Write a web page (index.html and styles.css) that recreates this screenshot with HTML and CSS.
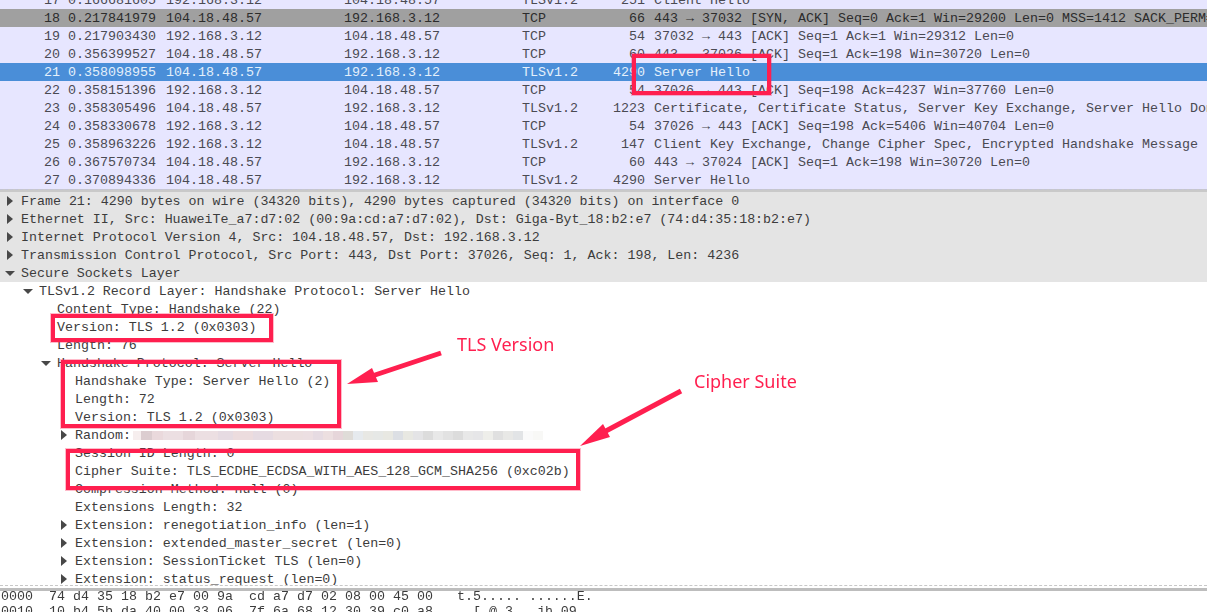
FILE: index.html
```html
<!DOCTYPE html>
<html lang="en">
<head>
<meta charset="utf-8">
<title>Wireshark capture</title>
<link rel="stylesheet" href="styles.css">
</head>
<body>
<div class="app">
  <section class="packets">
    <div class="pkt"><span class="no">17</span><span class="time">0.166681605</span><span class="addr">192.168.3.12</span><span class="addr">104.18.48.57</span><span class="proto">TLSv1.2</span><span class="len">251</span><span class="info">Client Hello</span></div>
    <div class="pkt dark"><span class="no">18</span><span class="time">0.217841979</span><span class="addr">104.18.48.57</span><span class="addr">192.168.3.12</span><span class="proto">TCP</span><span class="len">66</span><span class="info">443 → 37032 [SYN, ACK] Seq=0 Ack=1 Win=29200 Len=0 MSS=1412 SACK_PERM=1</span></div>
    <div class="pkt"><span class="no">19</span><span class="time">0.217903430</span><span class="addr">192.168.3.12</span><span class="addr">104.18.48.57</span><span class="proto">TCP</span><span class="len">54</span><span class="info">37032 → 443 [ACK] Seq=1 Ack=1 Win=29312 Len=0</span></div>
    <div class="pkt"><span class="no">20</span><span class="time">0.356399527</span><span class="addr">104.18.48.57</span><span class="addr">192.168.3.12</span><span class="proto">TCP</span><span class="len">60</span><span class="info">443 → 37026 [ACK] Seq=1 Ack=198 Win=30720 Len=0</span></div>
    <div class="pkt sel"><span class="no">21</span><span class="time">0.358098955</span><span class="addr">104.18.48.57</span><span class="addr">192.168.3.12</span><span class="proto">TLSv1.2</span><span class="len">4290</span><span class="info">Server Hello</span></div>
    <div class="pkt"><span class="no">22</span><span class="time">0.358151396</span><span class="addr">192.168.3.12</span><span class="addr">104.18.48.57</span><span class="proto">TCP</span><span class="len">54</span><span class="info">37026 → 443 [ACK] Seq=198 Ack=4237 Win=37760 Len=0</span></div>
    <div class="pkt"><span class="no">23</span><span class="time">0.358305496</span><span class="addr">104.18.48.57</span><span class="addr">192.168.3.12</span><span class="proto">TLSv1.2</span><span class="len">1223</span><span class="info">Certificate, Certificate Status, Server Key Exchange, Server Hello Done</span></div>
    <div class="pkt"><span class="no">24</span><span class="time">0.358330678</span><span class="addr">192.168.3.12</span><span class="addr">104.18.48.57</span><span class="proto">TCP</span><span class="len">54</span><span class="info">37026 → 443 [ACK] Seq=198 Ack=5406 Win=40704 Len=0</span></div>
    <div class="pkt"><span class="no">25</span><span class="time">0.358963226</span><span class="addr">192.168.3.12</span><span class="addr">104.18.48.57</span><span class="proto">TLSv1.2</span><span class="len">147</span><span class="info">Client Key Exchange, Change Cipher Spec, Encrypted Handshake Message</span></div>
    <div class="pkt"><span class="no">26</span><span class="time">0.367570734</span><span class="addr">104.18.48.57</span><span class="addr">192.168.3.12</span><span class="proto">TCP</span><span class="len">60</span><span class="info">443 → 37024 [ACK] Seq=1 Ack=198 Win=30720 Len=0</span></div>
    <div class="pkt"><span class="no">27</span><span class="time">0.370894336</span><span class="addr">104.18.48.57</span><span class="addr">192.168.3.12</span><span class="proto">TLSv1.2</span><span class="len">4290</span><span class="info">Server Hello</span></div>
  </section>
  <div class="splitter"></div>
  <section class="details">
    <div class="node top l0"><i class="tw closed"></i>Frame 21: 4290 bytes on wire (34320 bits), 4290 bytes captured (34320 bits) on interface 0</div>
    <div class="node top l0"><i class="tw closed"></i>Ethernet II, Src: HuaweiTe_a7:d7:02 (00:9a:cd:a7:d7:02), Dst: Giga-Byt_18:b2:e7 (74:d4:35:18:b2:e7)</div>
    <div class="node top l0"><i class="tw closed"></i>Internet Protocol Version 4, Src: 104.18.48.57, Dst: 192.168.3.12</div>
    <div class="node top l0"><i class="tw closed"></i>Transmission Control Protocol, Src Port: 443, Dst Port: 37026, Seq: 1, Ack: 198, Len: 4236</div>
    <div class="node top l0"><i class="tw open"></i>Secure Sockets Layer</div>
    <div class="node l1"><i class="tw open"></i>TLSv1.2 Record Layer: Handshake Protocol: Server Hello</div>
    <div class="node l2"><i class="tw"></i>Content Type: Handshake (22)</div>
    <div class="node l2"><i class="tw"></i>Version: TLS 1.2 (0x0303)</div>
    <div class="node l2"><i class="tw"></i>Length: 76</div>
    <div class="node l2"><i class="tw open"></i>Handshake Protocol: Server Hello</div>
    <div class="node l3"><i class="tw"></i>Handshake Type: Server Hello (2)</div>
    <div class="node l3"><i class="tw"></i>Length: 72</div>
    <div class="node l3"><i class="tw"></i>Version: TLS 1.2 (0x0303)</div>
    <div class="node l3"><i class="tw closed"></i>Random:<span class="blur"></span></div>
    <div class="node l3"><i class="tw"></i>Session ID Length: 0</div>
    <div class="node l3"><i class="tw"></i>Cipher Suite: TLS_ECDHE_ECDSA_WITH_AES_128_GCM_SHA256 (0xc02b)</div>
    <div class="node l3"><i class="tw"></i>Compression Method: null (0)</div>
    <div class="node l3"><i class="tw"></i>Extensions Length: 32</div>
    <div class="node l3"><i class="tw closed"></i>Extension: renegotiation_info (len=1)</div>
    <div class="node l3"><i class="tw closed"></i>Extension: extended_master_secret (len=0)</div>
    <div class="node l3"><i class="tw closed"></i>Extension: SessionTicket TLS (len=0)</div>
    <div class="node l3"><i class="tw closed"></i>Extension: status_request (len=0)</div>
  </section>
  <div class="splitter low"></div>
  <section class="hex">
    <div class="hexrow">0000  74 d4 35 18 b2 e7 00 9a  cd a7 d7 02 08 00 45 00   t.5..... ......E.</div>
    <div class="hexrow">0010  10 b4 5b da 40 00 33 06  7f 6a 68 12 30 39 c0 a8   ..[.@.3. .jh.09..</div>
  </section>
</div>

<div class="mark m1"></div>
<div class="mark m2"></div>
<div class="mark m3"></div>
<div class="mark m4"></div>
<svg class="arrows" width="1207" height="612" viewBox="0 0 1207 612" aria-hidden="true">
  <path d="M441 353 L372 376" />
  <polygon points="347,384 372,368 378,382" />
  <path d="M681 391 L604 432" />
  <polygon points="580,446 603,424 610,437" />
</svg>
<div class="note n1">TLS Version</div>
<div class="note n2">Cipher Suite</div>
</body>
</html>
```
FILE: styles.css
```css
* { box-sizing: border-box; }
html, body { margin: 0; padding: 0; }
body {
  width: 1207px;
  height: 612px;
  overflow: hidden;
  background: #fff;
  position: relative;
  font: 13.33px/18px "Liberation Mono", monospace;
  color: #3a3a3a;
}
.app { display: flex; flex-direction: column; height: 612px; overflow: hidden; filter: blur(0.35px); }

.packets { height: 189px; overflow: hidden; background: #e7e6ff; flex: none; }
.pkt {
  display: grid;
  grid-template-columns: 60px 106px 178px 178px 78px 45px 1fr;
  height: 18px;
  line-height: 20px;
  background: #e7e6ff;
  white-space: pre;
  color: #4a4a52;
  overflow: hidden;
}
.pkt:first-child { margin-top: -9px; }
.pkt.dark { background: #a0a0a0; color: #2c2c2c; }
.pkt.sel { background: #4a8ed8; color: #e4f0fb; }
.no { text-align: right; }
.time { padding-left: 8px; }
.len { text-align: right; }
.info { padding-left: 9px; overflow: hidden; }

.splitter {
  height: 3px;
  flex: none;
  background: #c9c9c9;
  border-top: 1px dashed #c4c4d4;
}
.splitter.low {
  height: 6px;
  background: #fff;
  border-top: 1px dashed #c8c8c8;
  border-bottom: 3px solid #bdbdbd;
}

.details { height: 393px; overflow: hidden; flex: none; background: #fff; font-size: 13.3px; }
.node { display: flex; align-items: flex-start; height: 18px; line-height: 20px; white-space: pre; color: #3c3c3c; }
.node.top { background: #e4e4e4; }
.l0 { padding-left: 3px; }
.l1 { padding-left: 21px; }
.l2 { padding-left: 39px; }
.l3 { padding-left: 57px; }
.tw { width: 18px; height: 18px; flex: none; position: relative; }
.tw.closed::before {
  content: "";
  position: absolute;
  left: 4px; top: 4px;
  border-left: 6px solid #484848;
  border-top: 5px solid transparent;
  border-bottom: 5px solid transparent;
}
.tw.open::before {
  content: "";
  position: absolute;
  left: 2px; top: 7px;
  border-top: 5px solid #484848;
  border-left: 5px solid transparent;
  border-right: 5px solid transparent;
}
.blur {
  width: 410px;
  height: 9px;
  margin: 5px 0 0 2px;
  background: linear-gradient(90deg,
    #f6eeee 0 8px, #dccdd0 8px 19px, #ead9dc 19px 30px, #ecdfe2 30px 50px,
    #e6d6da 50px 62px, #ecdfe2 62px 85px, #e6dbe2 85px 100px, #ecdcde 100px 120px,
    #e6dbe2 120px 140px, #ecdfe0 140px 170px,
    #ecdfe2 170px 180px, #e6dbe2 180px 190px, #ecdfe0 190px 200px, #e6d6da 200px 210px,
    #dfdcd8 210px 220px, #e6eaee 220px 230px, #e8e8e4 230px 240px, #e6e8e6 240px 250px,
    #e8e8e2 250px 260px, #dcdfe4 260px 270px, #e8e8e2 270px 280px, #e4e4e6 280px 290px,
    #dcdcdc 290px 300px, #e8e8e8 300px 310px, #e2e2e2 310px 320px, #dcdcdc 320px 330px,
    #e8e8e8 330px 340px, #e6e6e8 340px 350px, #eeeeea 350px 360px, #e0e0e0 360px 370px,
    #e8e8e6 370px 380px, #e2e4e6 380px 390px, #fafafa 390px 400px, #f8f8f6 400px 410px);
}

.hex { flex: 1; overflow: hidden; }
.hexrow { height: 15px; line-height: 11px; white-space: pre; color: #3c3c3c; padding-left: 1px; }

.mark { position: absolute; border: 4px solid #ff1f4f; box-shadow: 0 0 0 1px rgba(255, 31, 79, .3); }
.m1 { left: 632px; top: 54px; width: 139px; height: 41px; }
.m2 { left: 51px; top: 314px; width: 222px; height: 28px; }
.m3 { left: 61px; top: 360px; width: 280px; height: 68px; }
.m4 { left: 66px; top: 449px; width: 514px; height: 41px; }

.arrows { position: absolute; left: 0; top: 0; pointer-events: none; }
.arrows path { stroke: #ff1f4f; stroke-width: 5; fill: none; }
.arrows polygon { fill: #ff1f4f; }

.note {
  position: absolute;
  font: 18px/24px "Noto Sans", sans-serif;
  color: #ff1f4f;
  white-space: nowrap;
}
.n1 { left: 457px; top: 332px; }
.n2 { left: 694px; top: 369px; }
```
